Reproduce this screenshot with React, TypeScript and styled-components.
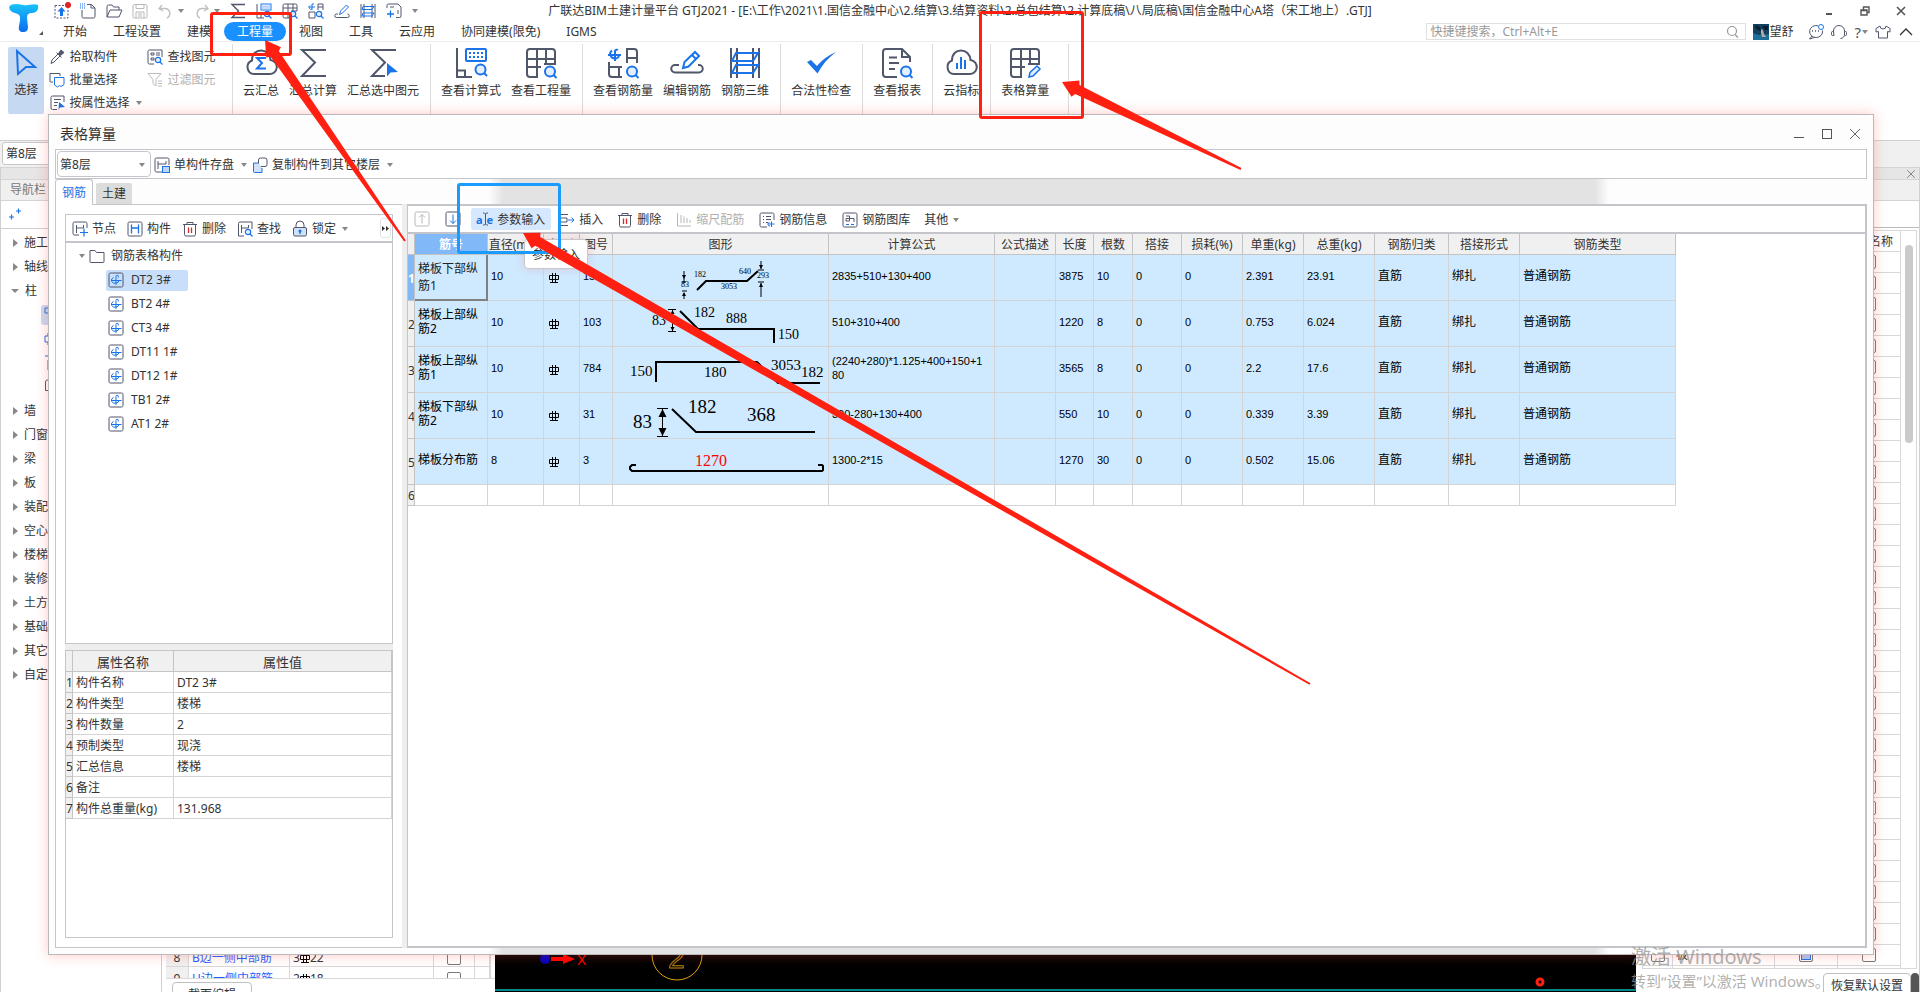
import React from "react";
import styled, { createGlobalStyle, css } from "styled-components";

const GlobalStyle = createGlobalStyle`
  * { box-sizing: border-box; }
  html, body { margin: 0; height: 100%; }
  #root { height: 100%; }
  body, button, input, select, table {
    font-family: "Noto Sans", "Noto Sans CJK SC", sans-serif;
    font-size: 12px;
    line-height: 16px;
    color: #333;
  }
  body { background: #fff; overflow: hidden; }
  button { border: 0; padding: 0; background: none; white-space: nowrap; }
  table { border-collapse: separate; border-spacing: 0; }
`;

const DARK = "#50576b";
const BLUE = "#1a73e8";
const LINE = "#c3c5ca";

/* ---------- icons ---------- */

const Svg = styled.svg`
  display: block;
  flex: none;
  fill: none;
  stroke: ${DARK};
  overflow: visible;
`;

type IconProps = { name: string; size?: number };

const magnifierSmall = (
  <g stroke={BLUE} strokeWidth="1.2">
    <circle cx="11" cy="11" r="2.7" fill="#e3effd" />
    <path d="M13 13l2.5 2.5" />
  </g>
);
const magnifierBig = (
  <g stroke={BLUE} strokeWidth="2">
    <circle cx="24" cy="23.5" r="5" fill="#e3effd" />
    <path d="M27.5 27l3 3" />
  </g>
);
const bigGrid = <path d="M12 29H4a3 3 0 0 1-3-3V4a3 3 0 0 1 3-3h22a3 3 0 0 1 3 3v12H18M1 11h28M11 1v28M20 1v15M1 19h14" />;

const smallIcons: Record<string, React.ReactNode> = {
  upload: <><rect x="1" y="2.500" width="13" height="12.500" strokeDasharray="2 1.500" /><path d="M7.500 4l4 4.500h-2.500v4.500h-3V8.500h-2.500z" fill={BLUE} stroke="none" /><circle cx="14" cy="2" r="3" fill="#e02020" stroke="none" /></>,
  newDoc: <><path d="M7 1.500h4.500L15 5v8.500a1.500 1.500 0 0 1-1.500 1.500h-10A1.500 1.500 0 0 1 2 13.500V7M11 1.500V5h4" /><path d="M0 1h5M0 3h5M0 5h5" stroke={BLUE} strokeDasharray="1 1" /></>,
  open: <path d="M1 14V3.500A1.500 1.500 0 0 1 2.500 2H6l1.500 2H13v3M1 14l3-7h12l-3 7z" />,
  save: <g stroke="#b8b8b8"><path d="M2.500 1.500h11a1.500 1.500 0 0 1 1.500 1.500v10.500a1.500 1.500 0 0 1-1.500 1.500h-11A1.500 1.500 0 0 1 1 13.500V3a1.500 1.500 0 0 1 1.500-1.500zM4 1.500v4h8v-4M4 15V9h8v6M6 11h4M6 13h4" /></g>,
  undo: <path d="M4 2L1 5.500l4 2.500M1 5.500h6a5 5 0 0 1 2 9.500" stroke="#c0c0c0" strokeWidth="1.400" />,
  redo: <path d="M11 2l3 3.500-4 2.500M14 5.500H8a5 5 0 0 0-2 9.500" stroke="#c0c0c0" strokeWidth="1.400" />,
  sigma: <path d="M15 1.500H2L8.500 8 2 14.500h13" strokeWidth="1.400" />,
  calc: <><path d="M1 1v14h7M1 11h4v4" /><rect x="5" y="1" width="10" height="6" stroke={BLUE} /><path d="M6.500 3.200h7M6.500 5h7" stroke={BLUE} strokeDasharray="1 1" />{magnifierSmall}</>,
  grid: <><path d="M8 15H2.500A1.500 1.500 0 0 1 1 13.500v-11A1.500 1.500 0 0 1 2.500 1h11A1.500 1.500 0 0 1 15 2.500V8H9M1 5h14M6 1v14M11 1v7M1 10h6" />{magnifierSmall}</>,
  rebarQty: <><path d="M1 9v6h6M1 9h6v6M10 7V1h5v6M10 4h5" /><path d="M1 4h6M4 7V1h2M2 2.500a2 2 0 0 0 2 3.500" stroke={BLUE} />{magnifierSmall}</>,
  editRebar: <><path d="M4 11H2.500a1.500 1.500 0 0 0 0 3.500h11a1.500 1.500 0 0 0 0-3.500" /><path d="M5.500 11.500l1-3.500 6-6 2 2-6 6z" stroke={BLUE} /></>,
  rebar3d: <><path d="M1 1v14M4 1v14M12 1v14M15 1v14" /><path d="M3 3.500h11l-2 3H2zM3 10h11l-2 3H2z" stroke={BLUE} /></>,
  docPlus: <><path d="M1 5V2.500A1.500 1.500 0 0 1 2.500 1H12l3 3v9a1.500 1.500 0 0 1-1.500 1.500H10M4 4h4M12 7v4" /><path d="M1 11h7M4.500 7.500v7" stroke={BLUE} strokeWidth="1.300" /></>,
  picker: <><path d="M2 14.500l1-3.500 6-6 2 2-6 6zM7.500 3.500l5 5" /><path d="M9.500 4.500l2.500-3.500 3 2.500-3.500 3z" fill={DARK} /></>,
  batch: <><path d="M4 10H1.500a.5.5 0 0 1-.5-.5V1.500h10V4" /><path d="M5.500 5.500H15v7l-3 2-1.500-1-2 1.500-3-2z" stroke={BLUE} /></>,
  byAttr: <><path d="M8 14.500H3.500A1.500 1.500 0 0 1 2 13V2.500A1.500 1.500 0 0 1 3.500 1H15v6M5 4.500h7M5 7.500h4M5 10.500h3" /><path d="M10 7l6 5-5 .5-1.500 2.500z" fill={BLUE} stroke="none" /></>,
  findEl: <><path d="M7 15H2.500A1.500 1.500 0 0 1 1 13.500v-11A1.500 1.500 0 0 1 2.500 1H15v7M4 4h3v2H4zM4 9h3v2H4zM9 4h4M9 6h4" />{magnifierSmall}</>,
  filter: <g stroke="#bcbcbc"><path d="M1 1.500h13L9 7.500v6.500l-3-2.500v-4zM11 9h4M11 11.500h4M11 14h4" /></g>,
  memberSave: <><path d="M8 15H2.500A1.500 1.500 0 0 1 1 13.500v-11A1.500 1.500 0 0 1 2.500 1h11A1.500 1.500 0 0 1 15 2.500V8M4 4v8M12 4v3M4 7h8" /><rect x="8.500" y="9.500" width="7" height="6" fill="#bcd7f8" stroke={BLUE} /></>,
  copy: <><rect x="6.500" y="1" width="8.500" height="8.500" rx="2" /><path d="M6 6H1.500v8.500a1 1 0 0 0 1 1H10V11" fill="#cfe2fa" stroke={BLUE} /></>,
  node: <><path d="M7 14H2.500A1.500 1.500 0 0 1 1 12.500v-10A1.500 1.500 0 0 1 2.500 1h11A1.500 1.500 0 0 1 15 2.500V7M4.500 4v8M11.500 4v3M4.500 7h7" /><path d="M8 11.500h8M12 7.500v8" stroke={BLUE} strokeWidth="1.200" /></>,
  member: <><rect x="1" y="1" width="14" height="14" rx="1.500" /><path d="M4.500 3.500v9M11.500 3.500v9M4.500 7h7" stroke={BLUE} strokeWidth="1.300" /></>,
  trash: <><path d="M1 3.500h14M5 3.500V1.500h6v2M2.500 3.500v10A1.500 1.500 0 0 0 4 15h8a1.500 1.500 0 0 0 1.500-1.500v-10" /><path d="M6.500 6.500v5.500M9.500 6.500v5.500" stroke="#d42a2a" strokeWidth="1.300" /></>,
  find: <><path d="M7 15H1.500V2.500A1.500 1.500 0 0 1 3 1h12v7M4.500 4v8M11.500 4v3M4.500 7h7" />{magnifierSmall}</>,
  lock: <><path d="M4 7V4a4 4 0 0 1 8 0v3" /><rect x="1.500" y="6.500" width="13" height="8.500" rx="1.500" fill="#cfe2fa" /><circle cx="8" cy="10" r="1.500" fill={BLUE} stroke="none" /><path d="M8 10v3" stroke={BLUE} strokeWidth="1.300" /></>,
  up: <g stroke="#b8b8b8"><rect x="1" y="1" width="14" height="14" rx="1.500" /><path d="M8 12.500v-9M5 6.500l3-3 3 3" /></g>,
  down: <><rect x="1" y="1" width="14" height="14" rx="1.500" /><path d="M8 3.500v9M5 9.500l3 3 3-3" stroke={BLUE} /></>,
  cursorText: <path d="M6 1h1.500l1 1 1-1H11M6 13h1.500l1-1 1 1H11M8.500 2v10" />,
  insert: <><path d="M1 2.500h8M1 6h7v4H1M1 13.500h8" /><path d="M9 8h6M12.500 5.500L15 8l-2.500 2.500" stroke={BLUE} /></>,
  scale: <g stroke="#b8b8b8"><path d="M1.500 1v13H15M5 3v8M8 4.500v6.500M11 6v5M14 8v3" /></g>,
  info: <><path d="M8 15H2.500A1.500 1.500 0 0 1 1 13.500v-11A1.500 1.500 0 0 1 2.500 1h11A1.500 1.500 0 0 1 15 2.500V8M4 4.500h1M7 4.500h5M4 7.500h1M7 7.500h5M4 10.500h1M7 10.500h2" /><path d="M9.500 12h6M12.500 15V9.500M10.500 10.500a1.500 1.500 0 1 0 .5 3.500" stroke={BLUE} /></>,
  library: <><rect x="1" y="1" width="14" height="14" rx="1.500" /><path d="M4 4h3.500v5H4V6.500h8V10" /><path d="M4 12.500h3M9 12.500h3" stroke={BLUE} strokeWidth="1.200" /></>,
  folder: <path d="M1 13.500v-11h5l1.500 2H15v9a1 1 0 0 1-1 1H2a1 1 0 0 1-1-1z" />,
  rebarItem: <><rect x="1" y="1" width="14" height="14" rx="1.500" /><path d="M3 8.500h10.500M8 13V4.500a1.200 1.200 0 0 1 2.400 0v1M5.500 5.500a3 2.800 0 0 0 2.500 5.500 3 3 0 0 0 3-2.500" stroke={BLUE} /></>,
  plusPlus: <path d="M1 11h5M3.500 8.500v5M8 5h5M10.500 2.500v5" stroke={BLUE} strokeWidth="1.200" />,
  pillarA: <path d="M1 1h14v5H10v9H5V6H1z" stroke={BLUE} />,
  pillarB: <path d="M4 2h8v3h3v6h-3v3H4v-3H1V5h3z" stroke={BLUE} />,
  pillarC: <path d="M1 1h14v4H4v10" stroke={BLUE} />,
  pillarD: <path d="M15 1H3.500A2 2 0 0 0 1.500 3v8.500h3V15" />,
  search: <g stroke="#999" strokeWidth="1.200"><circle cx="7" cy="7" r="4.500" /><path d="M10 10.500l3 3" /></g>,
  chat: <><path d="M14.500 6.500a6.500 6 0 1 1-4.500-4.700M4 12l-2.500 3 5-1.500" /><path d="M4 7h1M7 7h1M10 7h1" strokeWidth="1.500" /><circle cx="13" cy="3" r="2.500" stroke={BLUE} /></>,
  headset: <path d="M2.500 9V7a5.500 5.500 0 0 1 11 0v3a4 4 0 0 1-4 4.500M2.500 7.500h-1a1 1 0 0 0-1 1v2a1 1 0 0 0 1 1h1.500zM13.500 7.500h1a1 1 0 0 1 1 1v2a1 1 0 0 1-1 1h-1" />,
  shirt: <path d="M5 2L1 4.500v3.500l2.500-.5V14h9V7.500L15 8V4.500L11 2a3 3 0 0 1-6 0z" />,
  chevUp: <path d="M2 11l6-6 6 6" stroke="#333" strokeWidth="1.300" />,
  min: <path d="M5 11h6" stroke="#555" strokeWidth="2" />,
  restore: <path d="M4 7h6v5H4zM6.500 6.500V4h5.500v5.500H10M4 7.500h6" stroke="#555" strokeWidth="1.400" />,
  close: <path d="M4 4l8 8M12 4l-8 8" stroke="#555" strokeWidth="1.600" />,
  thinMin: <path d="M3 11.500h10" stroke="#555" />,
  thinMax: <rect x="3.500" y="3.500" width="9" height="9" stroke="#555" />,
  thinClose: <path d="M3 3l10 10M13 3L3 13" stroke="#666" />,
};

const bigIcons: Record<string, React.ReactNode> = {
  cloudSigma: <><path d="M8 26a7 7 0 0 1-2-13.500C6 6 10 2.500 15 2.500s9 3.500 9.500 9.500A7 7 0 0 1 23 26z" strokeWidth="2" /><path d="M20 10h-9l5 5-5 5.500h9" stroke={BLUE} strokeWidth="2" /></>,
  sigma: <path d="M28 2H4l13 12.500L4 28h24" strokeWidth="2" />,
  sigmaCursor: <><path d="M28 2H4l13 12.500L4 28h13" strokeWidth="2" /><path d="M19 15l11 9-7.500.5-3.500 4z" fill={BLUE} stroke="none" /></>,
  calc: <><path d="M1 0v29h15M1 22.500h8V29" strokeWidth="2" /><rect x="10" y="1" width="20" height="12" rx="1" stroke={BLUE} strokeWidth="2" /><path d="M13 5h14M13 9h14" stroke={BLUE} strokeWidth="2" strokeDasharray="2 2" /><g stroke={BLUE} strokeWidth="2"><circle cx="24.500" cy="21.500" r="5" fill="#e3effd" /><path d="M28 25l3 3" /></g></>,
  gridFind: <g strokeWidth="2">{bigGrid}{magnifierBig}</g>,
  rebarQty: <g strokeWidth="2"><path d="M1 14v12a3 3 0 0 0 3 3h10M1 19h13M11 19v10M19 15V1h7a3 3 0 0 1 3 3v11M19 10h10" /><path d="M0 7h13M7 13V3a2 2 0 0 1 3-1M4 2.500a5 4.500 0 0 0 3 8 4 4 0 0 0 4-2.500" stroke={BLUE} />{magnifierBig}</g>,
  editRebar: <g strokeWidth="2"><path d="M7 17H3a3.500 3.500 0 0 0 0 7.500h24a3.500 3.500 0 0 0 0-7.500h-1" /><path d="M11 20l1.500-6L23 4l4 4-10.500 10.500zM20 7l4 4" stroke={BLUE} /></g>,
  rebar3d: <g strokeWidth="2"><path d="M1 0v30M7 0v30M23 0v30M29 0v30" /><path d="M6 5h22l-5 8H2zM6 17h22l-5 8H2z" stroke={BLUE} /></g>,
  check: <path d="M1 14l4-2 6 6C17 11 23 7 30 4 22 10 16 17 11.500 25.500z" fill={BLUE} stroke="none" />,
  report: <g strokeWidth="2"><path d="M15 29H4a3 3 0 0 1-3-3V4a3 3 0 0 1 3-3h16l8 8v5M20 1v8h8M7 9.500h8M7 15h10M7 21h6" />{magnifierBig}</g>,
  cloudBars: <><path d="M8 26a7 7 0 0 1-2-13.500C6 6 10 2.500 15 2.500s9 3.500 9.500 9.500A7 7 0 0 1 23 26z" strokeWidth="2" /><path d="M11 15v6M15 9v12M19 12v9" stroke={BLUE} strokeWidth="2" /></>,
  gridPen: <g strokeWidth="2">{bigGrid}<path d="M19 29l1-4.500 7-6.500 3 3-7 7z" stroke={BLUE} strokeWidth="1.500" fill="#e3effd" /></g>,
  cursor: <path d="M1 2l18 16h-9l-8 7z" stroke={BLUE} strokeWidth="2" />,
};

const Icon = ({ name, size = 16 }: IconProps) => (
  <Svg width={size} height={size} viewBox="0 0 16 16" aria-hidden>{smallIcons[name]}</Svg>
);
const BigIcon = ({ name }: { name: string }) => (
  <Svg width={30} height={30} viewBox="0 0 30 30" aria-hidden>{bigIcons[name]}</Svg>
);

const Caret = styled.span<{ $left?: number }>`
  width: 0;
  height: 0;
  border: 3px solid transparent;
  border-top: 4px solid #888;
  border-bottom: 0;
  margin-left: ${(p) => p.$left ?? 0}px;
  flex: none;
`;

/* ---------- application frame ---------- */

const Page = styled.div`
  position: relative;
  height: 100vh;
  display: flex;
  flex-direction: column;
  overflow: hidden;
  background: #fff;
`;

const Header = styled.header`
  display: grid;
  grid-template-columns: 50px 1fr auto 1fr 50px;
  grid-template-rows: 22px 19px;
  border-bottom: 1px solid #ececec;
  flex: none;
`;

const LogoBox = styled.div`
  grid-row: 1 / 3;
  padding: 3px 0 0 8px;
`;

const QuickBar = styled.div`
  display: flex;
  align-items: center;
  gap: 10px;
  padding-left: 4px;
`;
const QuickPair = styled.span`
  display: flex;
  align-items: center;
  gap: 4px;
`;
const AppTitle = styled.h1`
  margin: 0;
  font-size: 12px;
  font-weight: 400;
  line-height: 22px;
  white-space: nowrap;
`;
const WindowControls = styled.div`
  grid-column: 4 / 6;
  display: flex;
  justify-content: flex-end;
  align-items: center;
  gap: 20px;
  padding-right: 11px;
`;

const MenuRow = styled.div`
  grid-column: 2 / 6;
  display: flex;
  align-items: stretch;
`;
const Menu = styled.nav`
  display: flex;
`;
const MenuItem = styled.button<{ $active?: boolean }>`
  padding: 0 13px;
  line-height: 19px;
  ${(p) => p.$active && css`background: #1890ff; color: #fff; border-radius: 10px;`}
`;
const MenuTools = styled.div`
  margin-left: auto;
  display: flex;
  align-items: center;
  padding-right: 6px;
  gap: 7px;
`;
const SearchBox = styled.label`
  display: flex;
  align-items: center;
  width: 320px;
  height: 17px;
  border: 1px solid #e0e0e0;
  padding: 0 4px 0 3px;
`;
const SearchInput = styled.input`
  flex: 1;
  border: 0;
  padding: 0;
  height: 15px;
  outline: 0;
  background: none;
  &::placeholder { color: #999; opacity: 1; }
`;
const User = styled.span`
  display: flex;
  align-items: center;
  margin-right: 8px;
`;
const Help = styled.button`
  display: flex;
  align-items: center;
  gap: 1px;
  font-size: 15px;
  color: ${DARK};
`;

const Ribbon = styled.div`
  display: flex;
  align-items: stretch;
  height: 98px;
  padding-top: 2px;
  flex: none;
`;
const PickGroup = styled.div`
  display: flex;
  width: 233px;
  padding: 3px 0 0 8px;
  border-right: 1px solid #dcdcdc;
`;
const SelectTool = styled.button`
  width: 40px;
  height: 67px;
  border-radius: 2px;
  background: #c5daf2;
  display: flex;
  flex-direction: column;
  align-items: center;
  gap: 6px;
  padding-top: 2px;
`;
const PickColumn = styled.div`
  display: flex;
  flex-direction: column;
  margin: -2px 0 0 5px;
  width: 93px;
`;
const PickButton = styled.button<{ $off?: boolean }>`
  display: flex;
  align-items: center;
  gap: 4px;
  height: 23px;
  color: ${(p) => (p.$off ? "#b0b0b0" : "#333")};
`;
const Group = styled.div<{ $wide?: boolean }>`
  display: flex;
  align-items: flex-start;
  padding: 4px ${(p) => (p.$wide ? 14 : 6)}px 0 5px;
  border-right: 1px solid #dcdcdc;
`;
const BigButton = styled.button`
  display: flex;
  flex-direction: column;
  align-items: center;
  gap: 5px;
  padding: 0 5px;
`;

const FloorStrip = styled.div`
  height: 27px;
  flex: none;
  background: #f0f0f0;
  border-top: 1px solid #d0d0d0;
  padding: 1px 1px 2px 2px;
`;
const FloorField = styled.select`
  appearance: none;
  width: 120px;
  height: 23px;
  border: 1px solid #c8c8c8;
  border-radius: 3px;
  background: #fff;
  padding: 0 3px;
`;

const Workspace = styled.div`
  flex: 1;
  min-height: 0;
  display: flex;
`;
const GripBar = styled.div`
  height: 12px;
  flex: none;
  background: #e6e6e6;
  border-top: 1px solid #d4d4d4;
  display: flex;
  justify-content: flex-end;
  align-items: center;
  padding-right: 2px;
`;
const PanelTitle = styled.div`
  height: 22px;
  flex: none;
  background: #f0f0f0;
  border: solid #d4d4d4;
  border-width: 1px 0;
  padding-left: 9px;
  line-height: 19px;
  color: #777;
`;
const NavPanel = styled.aside`
  width: 162px;
  flex: none;
  display: flex;
  flex-direction: column;
  border: solid #d0d0d0;
  border-width: 0 1px;
`;
const NavTools = styled.div`
  height: 28px;
  border-bottom: 1px solid #d0d0d0;
  padding: 5px 7px;
`;
const NavList = styled.ul`
  list-style: none;
  margin: 0;
  padding: 2px 0 0;
`;
const NavItem = styled.li<{ $open?: boolean }>`
  display: flex;
  align-items: center;
  height: 24px;
  padding-left: 12px;
  gap: 6px;
  &::before {
    content: "";
    border: 4px solid transparent;
    ${(p) => p.$open
      ? css`border-top-color: #888; margin: 4px 0 0 -2px;`
      : css`border-left: 5px solid #888; border-right: 0;`}
  }
`;
const NavSub = styled.li`
  display: flex;
  align-items: center;
  height: 24px;
  padding-left: 40px;
`;
const SubCell = styled.span<{ $on?: boolean }>`
  flex: 1;
  padding: 2px 3px;
  border-radius: 3px;
  background: ${(p) => (p.$on ? "#c5daf2" : "transparent")};
`;

const AttrPanel = styled.section`
  width: 333px;
  flex: none;
  display: flex;
  flex-direction: column;
`;
const AttrBody = styled.div`
  flex: 1;
  display: flex;
  flex-direction: column;
  justify-content: flex-end;
  padding-left: 4px;
`;
const AttrClip = styled.div`
  height: 33px;
  overflow: hidden;
  border-bottom: 1px solid #d8d8d8;
`;
const AttrTable = styled.table`
  table-layout: fixed;
  width: 325px;
  border-right: 1px solid #d8d8d8;
  td, th {
    height: 21px;
    padding: 3px 3px 0;
    border: solid #d8d8d8;
    border-width: 0 1px 1px 0;
    font-weight: 400;
    white-space: nowrap;
  }
  th { background: #f0f0f0; }
`;
const AttrFoot = styled.div`
  height: 13px;
  overflow: hidden;
  padding: 3px 0 0 6px;
`;
const PlainButton = styled.button<{ $w: number }>`
  width: ${(p) => p.$w}px;
  height: 26px;
  border: 1px solid #c0c0c0;
  border-radius: 4px;
  background: #fff;
`;
const LinkText = styled.span`
  color: #1f5fff;
`;

const Canvas = styled.div`
  flex: 1;
  display: flex;
  flex-direction: column;
  justify-content: flex-end;
  background: #000;
`;

const LayerPanel = styled.section`
  width: 284px;
  flex: none;
  display: flex;
  flex-direction: column;
  border-right: 1px solid #d0d0d0;
  background: #fff;
`;
const LayerTools = styled.div`
  height: 27px;
  flex: none;
  border-bottom: 1px solid #bbb;
`;
const LayerBox = styled.div`
  flex: 1;
  min-height: 0;
  overflow: hidden;
  margin: 2px 2px 0 6px;
  border: 1px solid #d8d8d8;
  display: flex;
  justify-content: space-between;
`;
const LayerTable = styled.table`
  table-layout: fixed;
  width: 258px;
  height: max-content;
  th, td {
    height: 21px;
    padding: 0;
    border: solid #d8d8d8;
    border-width: 0 1px 1px 0;
    text-align: center;
    font-weight: 400;
    white-space: nowrap;
  }
  th:last-child { padding: 1px 7px 0 0; text-align: right; }
  td:nth-child(2) { text-align: left; padding-left: 3px; }
`;
const ScrollThumb = styled.span`
  width: 8px;
  height: 198px;
  margin: 14px 3px 0 0;
  border-radius: 4px;
  background: #cacaca;
`;
const Check = styled.input`
  appearance: none;
  display: block;
  width: 14px;
  height: 14px;
  margin: 0 auto;
  border: 1px solid #777;
  border-radius: 2px;
  &:checked { background: #a9c8f5; box-shadow: inset 0 0 0 1px #fff, inset 0 0 0 2px ${BLUE}; }
`;
const LayerFoot = styled.div`
  height: 23px;
  flex: none;
  overflow: hidden;
  display: flex;
  justify-content: flex-end;
  align-items: flex-start;
  padding-top: 4px;
`;
const DarkThumb = styled.span`
  width: 8px;
  height: 30px;
  border-radius: 4px;
  background: #555;
`;

/* ---------- table-quantity dialog ---------- */

const Dialog = styled.section`
  position: absolute;
  left: 48px;
  right: 46px;
  top: 114px;
  bottom: 37px;
  display: flex;
  flex-direction: column;
  padding: 0 6px 6px;
  border: 1px solid #b9babd;
  background: linear-gradient(90deg, #fdfdfd 440px, #e3e3e3 454px, #e3e3e3 1546px, #fdfdfd 1560px);
  box-shadow: 0 0 12px rgba(255, 70, 60, 0.3);
`;
const DialogTitle = styled.header`
  display: flex;
  justify-content: space-between;
  align-items: center;
  height: 34px;
  margin: 0 -6px;
  padding: 4px 10px 0 11px;
  background: #fdfdfd;
  flex: none;
`;
const DialogName = styled.h2`
  margin: 0;
  font-size: 14px;
  line-height: 20px;
  font-weight: 400;
`;
const DialogControls = styled.div`
  display: flex;
  gap: 12px;
`;
const DialogBar = styled.div`
  display: flex;
  align-items: center;
  height: 30px;
  flex: none;
  border: 1px solid ${LINE};
  background: #fff;
  padding-left: 1px;
`;
const SelectWrap = styled.label`
  display: flex;
  align-items: center;
  width: 94px;
  height: 26px;
  border: 1px solid #c4c6ca;
  border-radius: 4px;
  padding: 2px 5px 0 2px;
  margin-right: 3px;
`;
const Select = styled.select`
  appearance: none;
  flex: 1;
  min-width: 0;
  border: 0;
  background: none;
  padding: 0;
  outline: 0;
`;
const ToolButton = styled.button<{ $off?: boolean; $on?: boolean }>`
  display: flex;
  align-items: center;
  gap: 4px;
  height: 22px;
  padding-top: 2px;
  color: ${(p) => (p.$off ? "#b0b0b0" : "#333")};
  ${(p) => p.$on && css`background: #d6e8fd; border-radius: 3px; padding: 2px 6px 0 5px;`}
`;
const Tabs = styled.div`
  display: flex;
  align-items: flex-end;
  height: 26px;
  flex: none;
  margin-bottom: -1px;
  position: relative;
`;
const Tab = styled.button<{ $active?: boolean }>`
  ${(p) => p.$active
    ? css`height: 26px; width: 38px; background: #fff; color: ${BLUE}; border: 1px solid ${LINE}; border-bottom: 0; border-radius: 3px 3px 0 0;`
    : css`height: 21px; width: 36px; margin: 0 0 1px 3px; background: #dcdcdc; border-radius: 2px 2px 0 0;`}
`;
const DialogBody = styled.div`
  flex: 1;
  min-height: 0;
  display: flex;
`;
const LeftPane = styled.div`
  width: 347px;
  flex: none;
  display: flex;
  flex-direction: column;
  border: 1px solid ${LINE};
  border-right: 0;
  background: #fff;
  padding: 9px;
`;
const Splitter = styled.div`
  width: 5px;
  background: #eee;
`;
const RightPane = styled.div`
  flex: 1;
  min-width: 0;
  display: flex;
  flex-direction: column;
  border: 2px solid ${LINE};
  border-left-width: 1px;
  background: #fff;
`;
const TreeBox = styled.div`
  flex: 431 1 0;
  min-height: 0;
  border: 1px solid ${LINE};
`;
const TreeTools = styled.div`
  display: flex;
  align-items: center;
  justify-content: space-between;
  height: 28px;
  border-bottom: 2px solid ${LINE};
  padding: 0 1px 0 6px;
`;
const ToolRow = styled.div`
  display: flex;
  align-items: center;
  gap: 11px;
`;
const MoreButton = styled.button`
  width: 11px;
  height: 20px;
  border: 1px solid #e4e4e4;
  border-radius: 3px;
  display: flex;
  align-items: center;
  justify-content: center;
`;
const Tree = styled.ul`
  list-style: none;
  margin: 0;
  padding: 1px 0 0;
`;
const TreeRoot = styled.li`
  display: flex;
  align-items: center;
  height: 24px;
  padding-left: 13px;
  gap: 4px;
  span:last-child { margin-left: 2px; }
`;
const TreeItem = styled.li`
  display: flex;
  align-items: center;
  height: 24px;
  padding-left: 40px;
`;
const TreeCell = styled.span<{ $on?: boolean }>`
  display: flex;
  align-items: center;
  gap: 7px;
  width: 82px;
  height: 21px;
  padding-left: 2px;
  border-radius: 2px;
  background: ${(p) => (p.$on ? "#c7dffa" : "transparent")};
`;
const BoxGap = styled.div`
  height: 6px;
  background: #eee;
`;
const PropBox = styled.div`
  flex: 288 1 0;
  min-height: 0;
  border: 1px solid ${LINE};
`;
const PropTable = styled.table`
  table-layout: fixed;
  width: 100%;
  th, td {
    height: 21px;
    padding: 2px 3px 0;
    border: solid #d4d4d4;
    border-width: 0 1px 1px 0;
    text-align: left;
    font-weight: 400;
    white-space: nowrap;
  }
  thead th { background: #f0f0f0; border-color: #c4c4c4; font-size: 13px; text-align: center; }
  tbody th { background: #f0f0f0; border-color: #c4c4c4; padding: 2px 0 0; }
`;
const GridTools = styled.div`
  display: flex;
  align-items: center;
  height: 28px;
  flex: none;
  border-bottom: 2px solid ${LINE};
  padding-left: 6px;
`;
const Pad = styled.span<{ $w: number }>`
  width: ${(p) => p.$w}px;
  flex: none;
`;
const AeLabel = styled.span`
  display: flex;
  align-items: center;
  font-weight: 700;
  font-size: 11px;
  color: ${BLUE};
  svg { margin: 0 -6px; }
`;

const RebarTable = styled.table`
  table-layout: fixed;
  width: 1268px;
  th, td {
    height: 46px;
    padding: 0 3px 3px;
    border: solid #d4d4d4;
    border-width: 0 1px 1px 0;
    text-align: left;
    font-weight: 400;
    overflow: hidden;
  }
  thead th {
    height: 21px;
    padding: 2px 0 0;
    background: #f0f0f0;
    border-color: #c4c4c4;
    text-align: center;
    white-space: nowrap;
  }
  tbody th { background: #f0f0f0; padding: 2px 0 0; border-color: #c4c4c4; }
  tbody td { background: #cfe9ff; color: #000; line-height: 14px; }
  tbody tr:last-child th, tbody tr:last-child td { height: 21px; background: #fff; }
  tbody tr:last-child th { background: #f0f0f0; }
  thead th.picked, tbody th.picked { background: #80b8f8; color: #fff; font-weight: 700; }
  tbody td.current { padding: 0 3px; border: solid #808080; border-width: 0 2px 2px 0; line-height: 17px; color: #222; }
  tbody td.num, tbody td.formula { font-family: "Liberation Sans", "Noto Sans CJK SC", sans-serif; font-size: 11px; }
  tbody td.formula { word-break: break-all; padding-right: 8px; }
  tbody td.grade { padding: 0 0 0 5px; }
  tbody td.draw { padding: 0; }
`;

const cols = [7, 73, 56, 36, 33, 216, 166, 61, 38, 39, 49, 61, 61, 71, 74, 71, 156];
const heads = ["", "筋号", "直径(mm)", "级别", "图号", "图形", "计算公式", "公式描述", "长度", "根数", "搭接", "损耗(%)", "单重(kg)", "总重(kg)", "钢筋归类", "搭接形式", "钢筋类型"];

const GradeSvg = styled.svg`
  display: inline-block;
  vertical-align: middle;
  fill: none;
  stroke: #000;
`;
const Grade = () => (
  <GradeSvg width="10" height="10" viewBox="0 0 10 10" aria-hidden>
    <path d="M3.500 0v9M6.500 0v9M.5 2.500h9v4h-9zM1 9.500h8" />
  </GradeSvg>
);

const ShapeSvg = styled.svg`
  display: block;
  fill: none;
  stroke: #000;
  stroke-width: 2px;
`;
const ShapeText = styled.text<{ $s: number; $c?: string }>`
  font-family: "Liberation Serif", serif;
  font-size: ${(p) => p.$s}px;
  fill: ${(p) => p.$c ?? "#000"};
  stroke: none;
`;
const Down = ({ x, y, s = 3 }: { x: number; y: number; s?: number }) => <path d={`M${x - s} ${y - 2 * s}h${2 * s}l-${s} ${2 * s}z`} fill="#000" stroke="none" />;
const Up = ({ x, y, s = 3 }: { x: number; y: number; s?: number }) => <path d={`M${x - s} ${y + 2 * s}h${2 * s}l-${s} -${2 * s}z`} fill="#000" stroke="none" />;

const shapes = [
  <>
    <path d="M71 16v12M69 27h4M69 36h5M71 38v6M148 6v8M145 15h6M145 27h6M148 28v14" strokeWidth="1" />
    <Down x={71} y={24} s={2} /><Up x={71} y={37} s={2} /><Down x={148} y={14} s={2} /><Up x={148} y={28} s={2} />
    <path d="M84 35l9-9h41l11-10" />
    <ShapeText $s={8} x="68" y="32">83</ShapeText>
    <ShapeText $s={8} x="81" y="22">182</ShapeText>
    <ShapeText $s={8} x="126" y="19">640</ShapeText>
    <ShapeText $s={8} x="144" y="23">293</ShapeText>
    <ShapeText $s={8} x="108" y="34">3053</ShapeText>
  </>,
  <>
    <path d="M55 8.500h8M55 30.500h8M59.500 9v22" strokeWidth="1" />
    <Up x={59.5} y={9} s={2} /><Down x={59.5} y={30} s={2} />
    <path d="M67 10l18 18h76v14" />
    <ShapeText $s={14} x="39" y="24">83</ShapeText>
    <ShapeText $s={14} x="81" y="16">182</ShapeText>
    <ShapeText $s={14} x="113" y="22">888</ShapeText>
    <ShapeText $s={14} x="165" y="38">150</ShapeText>
  </>,
  <>
    <path d="M43 35V15h101l21 21h42" />
    <ShapeText $s={15} x="17" y="29">150</ShapeText>
    <ShapeText $s={15} x="91" y="30">180</ShapeText>
    <ShapeText $s={15} x="158" y="23">3053</ShapeText>
    <ShapeText $s={15} x="188" y="30">182</ShapeText>
  </>,
  <>
    <path d="M44 15.500h11M44 43.500h11M49.500 16v27" strokeWidth="1" />
    <Up x={49.5} y={16} s={4} /><Down x={49.5} y={43} s={4} />
    <path d="M59 16l24 23h119" />
    <ShapeText $s={19} x="20" y="35">83</ShapeText>
    <ShapeText $s={19} x="75" y="20">182</ShapeText>
    <ShapeText $s={19} x="134" y="28">368</ShapeText>
  </>,
  <>
    <path d="M23 26h-4l-2 2v2l2 2h190l1-1v-4l-1-1h-4" />
    <ShapeText $s={16} $c="#f00" x="82" y="27">1270</ShapeText>
  </>,
];

const rows = [
  ["梯板下部纵筋1", "10", "152", "2835+510+130+400", "3875", "10", "2.391", "23.91"],
  ["梯板上部纵筋2", "10", "103", "510+310+400", "1220", "8", "0.753", "6.024"],
  ["梯板上部纵筋1", "10", "784", "(2240+280)*1.125+400+150+180", "3565", "8", "2.2", "17.6"],
  ["梯板下部纵筋2", "10", "31", "300-280+130+400", "550", "10", "0.339", "3.39"],
  ["梯板分布筋", "8", "3", "1300-2*15", "1270", "30", "0.502", "15.06"],
];

const props = [
  ["构件名称", "DT2 3#"],
  ["构件类型", "楼梯"],
  ["构件数量", "2"],
  ["预制类型", "现浇"],
  ["汇总信息", "楼梯"],
  ["备注", ""],
  ["构件总重量(kg)", "131.968"],
];

/* ---------- annotations ---------- */

const Tooltip = styled.div`
  position: absolute;
  left: 524px;
  top: 239px;
  height: 30px;
  padding: 0 7px;
  line-height: 29px;
  border: 1px solid #c8c8c8;
  border-radius: 4px;
  background: #fff;
  box-shadow: 0 0 8px rgba(255, 70, 60, 0.2);
`;
const Marker = styled.div<{ $x: number; $y: number; $w: number; $h: number; $c: string }>`
  position: absolute;
  left: ${(p) => p.$x}px;
  top: ${(p) => p.$y}px;
  width: ${(p) => p.$w}px;
  height: ${(p) => p.$h}px;
  border: 3px solid ${(p) => p.$c};
  border-radius: 3px;
  pointer-events: none;
`;
const Arrows = styled.svg`
  position: absolute;
  left: 0;
  top: 0;
  width: 100%;
  height: 100%;
  pointer-events: none;
  fill: #ff2012;
`;
const Watermark = styled.div`
  position: absolute;
  right: 94px;
  bottom: 0;
  width: 195px;
  white-space: nowrap;
  color: rgba(150, 150, 150, 0.75);
  font-size: 15px;
  line-height: 22px;
  pointer-events: none;
  strong { display: block; font-weight: 400; font-size: 20px; line-height: 26px; }
`;

const arrowPath = (tx: number, ty: number, ex: number, ey: number, neck: number) => {
  const len = Math.hypot(ex - tx, ey - ty);
  const dx = (ex - tx) / len;
  const dy = (ey - ty) / len;
  const at = (along: number, side: number) =>
    `${tx + dx * along - dy * side},${ty + dy * along + dx * side}`;
  return `M${at(0, 0)}L${at(15, -9)}L${at(17, -neck)}L${at(len, -1)}L${at(len, 1)}L${at(17, neck)}L${at(15, 9)}Z`;
};

const navBefore = ["施工", "轴线"];
const navAfter = ["墙", "门窗", "梁", "板", "装配", "空心", "楼梯", "装修", "土方", "基础", "其它", "自定"];

const ribbonGroups: [string, string][][] = [
  [["cloudSigma", "云汇总"], ["sigma", "汇总计算"], ["sigmaCursor", "汇总选中图元"]],
  [["calc", "查看计算式"], ["gridFind", "查看工程量"]],
  [["rebarQty", "查看钢筋量"], ["editRebar", "编辑钢筋"], ["rebar3d", "钢筋三维"]],
  [["check", "合法性检查"]],
  [["report", "查看报表"]],
  [["cloudBars", "云指标"]],
  [["gridPen", "表格算量"]],
];

const IconButton = ({ icon, label, size }: { icon: string; label: string; size?: number }) => (
  <button aria-label={label}><Icon name={icon} size={size} /></button>
);

export default function App() {
  return (
    <Page>
      <GlobalStyle />
      <Header>
        <LogoBox>
          <Svg width="38" height="34" viewBox="0 0 38 34" aria-hidden>
            <defs>
              <linearGradient id="logo" x1="0" y1="0" x2="0" y2="1">
                <stop offset="0" stopColor="#19c3f7" />
                <stop offset="1" stopColor="#0a6cf0" />
              </linearGradient>
            </defs>
            <path d="M1 4c3-4 8-3 14-2 6 1 10-2 15 0 1 5-2 8-6 8-3 0-5 1-5 5l1 9c0 4-2 5-5 5s-5-2-4-6c1-5 2-9 0-11C8 9 2 11 1 4z" fill="url(#logo)" stroke="none" />
            <path d="M35 28v4h-4z" fill="#555" stroke="none" />
          </Svg>
        </LogoBox>
        <QuickBar>
          {["upload", "newDoc", "open", "save"].map((n) => <IconButton key={n} icon={n} label={n} />)}
          <QuickPair><IconButton icon="undo" label="undo" /><Caret /></QuickPair>
          <QuickPair><IconButton icon="redo" label="redo" /><Caret /></QuickPair>
          {["sigma", "calc", "grid", "rebarQty", "editRebar", "rebar3d", "docPlus"].map((n) => <IconButton key={n} icon={n} label={n} />)}
          <Caret />
        </QuickBar>
        <AppTitle>广联达BIM土建计量平台 GTJ2021 - [E:\工作\2021\1.国信金融中心\2.结算\3.结算资料\2.总包结算\2.计算底稿\八局底稿\国信金融中心A塔（宋工地上）.GTJ]</AppTitle>
        <WindowControls>
          <IconButton icon="min" label="minimize" />
          <IconButton icon="restore" label="restore" />
          <IconButton icon="close" label="close" />
        </WindowControls>
        <MenuRow>
          <Menu>
            {["开始", "工程设置", "建模", "工程量", "视图", "工具", "云应用", "协同建模(限免)", "IGMS"].map((m) => (
              <MenuItem key={m} $active={m === "工程量"}>{m}</MenuItem>
            ))}
          </Menu>
          <MenuTools>
            <SearchBox>
              <SearchInput placeholder="快捷键搜索，Ctrl+Alt+E" aria-label="快捷键搜索" />
              <Icon name="search" />
            </SearchBox>
            <User>
              <Svg width="16" height="16" viewBox="0 0 16 16" aria-hidden>
                <g stroke="none">
                  <rect width="16" height="16" fill="#12405f" />
                  <path d="M0 9l6 2 10-1v6H0z" fill="#1c6f99" />
                  <path d="M2 1l5 2 1 4-5-2zM9 2h6v4h-3z" fill="#0a1c30" />
                  <path d="M8 5l2 1 1 4 2 3H9L8 9z" fill="#b9a9a4" />
                </g>
              </Svg>
              <span>望舒</span>
            </User>
            <IconButton icon="chat" label="chat" />
            <IconButton icon="headset" label="support" />
            <Help aria-label="help">?<Caret /></Help>
            <IconButton icon="shirt" label="skin" />
            <IconButton icon="chevUp" label="collapse" />
          </MenuTools>
        </MenuRow>
      </Header>

      <Ribbon>
        <PickGroup>
          <SelectTool>
            <Svg width="20" height="27" viewBox="0 0 20 27" aria-hidden>{bigIcons.cursor}</Svg>
            选择
          </SelectTool>
          <PickColumn>
            <PickButton><Icon name="picker" />拾取构件</PickButton>
            <PickButton><Icon name="batch" />批量选择</PickButton>
            <PickButton><Icon name="byAttr" />按属性选择<Caret $left={3} /></PickButton>
          </PickColumn>
          <PickColumn>
            <PickButton><Icon name="findEl" />查找图元</PickButton>
            <PickButton $off><Icon name="filter" />过滤图元</PickButton>
          </PickColumn>
        </PickGroup>
        {ribbonGroups.map((g, i) => (
          <Group key={i} $wide={i === ribbonGroups.length - 1}>
            {g.map(([icon, label]) => (
              <BigButton key={label}><BigIcon name={icon} />{label}</BigButton>
            ))}
          </Group>
        ))}
      </Ribbon>

      <FloorStrip>
        <FloorField aria-label="楼层" defaultValue="8"><option value="8">第8层</option></FloorField>
      </FloorStrip>

      <Workspace>
        <NavPanel>
          <GripBar />
          <PanelTitle>导航栏</PanelTitle>
          <NavTools><Icon name="plusPlus" /></NavTools>
          <NavList>
            {navBefore.map((n) => <NavItem key={n}>{n}</NavItem>)}
            <NavItem $open>柱</NavItem>
            {["pillarA", "pillarB", "pillarC", "pillarD"].map((n, i) => (
              <NavSub key={n}><SubCell $on={i === 0}><Icon name={n} /></SubCell></NavSub>
            ))}
            {navAfter.map((n) => <NavItem key={n}>{n}</NavItem>)}
          </NavList>
        </NavPanel>

        <AttrPanel>
          <GripBar />
          <PanelTitle />
          <AttrBody>
            <AttrClip>
              <AttrTable>
                <colgroup><col style={{ width: 23 }} /><col style={{ width: 101 }} /><col style={{ width: 144 }} /><col style={{ width: 41 }} /><col /></colgroup>
                <tbody>
                  <tr><th scope="row">8</th><td><LinkText>B边一侧中部筋</LinkText></td><td>3<Grade />22</td><td><Check type="checkbox" aria-label="附加 8" /></td><td /></tr>
                  <tr><th scope="row">9</th><td><LinkText>H边一侧中部筋</LinkText></td><td>2<Grade />18</td><td><Check type="checkbox" aria-label="附加 9" /></td><td /></tr>
                </tbody>
              </AttrTable>
            </AttrClip>
            <AttrFoot><PlainButton $w={80}>截面编辑</PlainButton></AttrFoot>
          </AttrBody>
        </AttrPanel>

        <Canvas>
          <Svg width="100%" height="50" aria-hidden>
            <circle cx="50" cy="17" r="5" fill="#0000c0" stroke="none" />
            <path d="M56 15h12v-3l12 5-12 5v-3H56z" fill="#f00" stroke="none" />
            <text x="82" y="23" fontSize="14" fill="#f00" stroke="none" fontFamily="Liberation Sans">X</text>
            <circle cx="182" cy="13" r="25" stroke="#e0a010" />
            <text x="173" y="26" fontSize="30" fill="none" stroke="#b08010" fontFamily="Liberation Sans">2</text>
            <rect x="0" y="47" width="100%" height="2" fill="#088" stroke="none" />
            <svg x="100%" overflow="visible"><circle cx="-96" cy="40" r="3" stroke="#ff2012" strokeWidth="3" /></svg>
          </Svg>
        </Canvas>

        <LayerPanel>
          <GripBar><Icon name="thinClose" size={12} /></GripBar>
          <PanelTitle />
          <LayerTools />
          <LayerBox>
            <LayerTable>
              <colgroup><col style={{ width: 30 }} /><col style={{ width: 102 }} /><col style={{ width: 63 }} /><col style={{ width: 63 }} /></colgroup>
              <thead><tr><th /><th /><th /><th scope="col">名称</th></tr></thead>
              <tbody>
                {Array.from({ length: 36 }, (_, i) => (
                  <tr key={i}>
                    <td><Check type="checkbox" aria-label={`显示 ${i + 1}`} /></td>
                    <td>{i === 33 ? "板" : ""}</td>
                    <td><Check type="checkbox" defaultChecked={i === 33} aria-label={`图元 ${i + 1}`} /></td>
                    <td><Check type="checkbox" aria-label={`名称 ${i + 1}`} /></td>
                  </tr>
                ))}
              </tbody>
            </LayerTable>
            <ScrollThumb />
          </LayerBox>
          <LayerFoot>
            <PlainButton $w={88}>恢复默认设置</PlainButton>
            <DarkThumb />
          </LayerFoot>
        </LayerPanel>
      </Workspace>

      <Dialog role="dialog" aria-label="表格算量">
        <DialogTitle>
          <DialogName>表格算量</DialogName>
          <DialogControls>
            <IconButton icon="thinMin" label="minimize dialog" />
            <IconButton icon="thinMax" label="maximize dialog" />
            <IconButton icon="thinClose" label="close dialog" />
          </DialogControls>
        </DialogTitle>
        <DialogBar>
          <SelectWrap>
            <Select aria-label="楼层" defaultValue="8"><option value="8">第8层</option></Select>
            <Caret />
          </SelectWrap>
          <ToolButton><Icon name="memberSave" />单构件存盘<Caret $left={3} /></ToolButton>
          <Pad $w={5} />
          <ToolButton><Icon name="copy" />复制构件到其它楼层<Caret $left={3} /></ToolButton>
        </DialogBar>
        <Tabs>
          <Tab $active>钢筋</Tab>
          <Tab>土建</Tab>
        </Tabs>
        <DialogBody>
          <LeftPane>
            <TreeBox>
              <TreeTools>
                <ToolRow>
                  <ToolButton><Icon name="node" />节点</ToolButton>
                  <ToolButton><Icon name="member" />构件</ToolButton>
                  <ToolButton><Icon name="trash" />删除</ToolButton>
                  <ToolButton><Icon name="find" />查找</ToolButton>
                  <ToolButton><Icon name="lock" />锁定<Caret $left={2} /></ToolButton>
                </ToolRow>
                <MoreButton aria-label="more">
                  <Svg width="7" height="5" viewBox="0 0 7 5" aria-hidden><path d="M0 0l3 2.500L0 5zM4 0l3 2.500L4 5z" fill="#333" stroke="none" /></Svg>
                </MoreButton>
              </TreeTools>
              <Tree>
                <TreeRoot><Caret /><Icon name="folder" /><span>钢筋表格构件</span></TreeRoot>
                {["DT2 3#", "BT2 4#", "CT3 4#", "DT11 1#", "DT12 1#", "TB1 2#", "AT1 2#"].map((t, i) => (
                  <TreeItem key={t}><TreeCell $on={i === 0}><Icon name="rebarItem" />{t}</TreeCell></TreeItem>
                ))}
              </Tree>
            </TreeBox>
            <BoxGap />
            <PropBox>
              <PropTable>
                <colgroup><col style={{ width: 7 }} /><col style={{ width: 101 }} /><col /></colgroup>
                <thead><tr><th /><th scope="col">属性名称</th><th scope="col">属性值</th></tr></thead>
                <tbody>
                  {props.map(([k, v], i) => (
                    <tr key={k}><th scope="row">{i + 1}</th><td>{k}</td><td>{v}</td></tr>
                  ))}
                </tbody>
              </PropTable>
            </PropBox>
          </LeftPane>
          <Splitter />
          <RightPane>
            <GridTools>
              <IconButton icon="up" label="move up" />
              <Pad $w={15} />
              <IconButton icon="down" label="move down" />
              <Pad $w={10} />
              <ToolButton $on>
                <AeLabel>a<Icon name="cursorText" />e</AeLabel>
                参数输入
              </ToolButton>
              <Pad $w={8} />
              <ToolButton><Icon name="insert" />插入</ToolButton>
              <Pad $w={14} />
              <ToolButton><Icon name="trash" />删除</ToolButton>
              <Pad $w={15} />
              <ToolButton $off><Icon name="scale" />缩尺配筋</ToolButton>
              <Pad $w={15} />
              <ToolButton><Icon name="info" />钢筋信息</ToolButton>
              <Pad $w={15} />
              <ToolButton><Icon name="library" />钢筋图库</ToolButton>
              <Pad $w={14} />
              <ToolButton>其他<Caret $left={1} /></ToolButton>
            </GridTools>
            <RebarTable>
              <colgroup>{cols.map((w, i) => <col key={i} style={{ width: w }} />)}</colgroup>
              <thead>
                <tr>{heads.map((h, i) => <th key={i} scope="col" className={i === 1 ? "picked" : undefined}>{h}</th>)}</tr>
              </thead>
              <tbody>
                {rows.map((r, i) => (
                  <tr key={i}>
                    <th scope="row" className={i === 0 ? "picked" : undefined}>{i + 1}</th>
                    <td className={i === 0 ? "current" : undefined}>{r[0]}</td>
                    <td className="num">{r[1]}</td>
                    <td className="grade"><Grade /></td>
                    <td className="num">{r[2]}</td>
                    <td className="draw">
                      <ShapeSvg width="215" height="45" viewBox="0 0 215 45">{shapes[i]}</ShapeSvg>
                    </td>
                    <td className="formula">{r[3]}</td>
                    <td />
                    <td className="num">{r[4]}</td>
                    <td className="num">{r[5]}</td>
                    <td className="num">0</td>
                    <td className="num">0</td>
                    <td className="num">{r[6]}</td>
                    <td className="num">{r[7]}</td>
                    <td>直筋</td>
                    <td>绑扎</td>
                    <td>普通钢筋</td>
                  </tr>
                ))}
                <tr><th scope="row">6</th>{cols.slice(1).map((_, i) => <td key={i} />)}</tr>
              </tbody>
            </RebarTable>
          </RightPane>
        </DialogBody>
      </Dialog>

      <Tooltip role="tooltip">参数输入</Tooltip>
      <Marker $x={210} $y={12} $w={82} $h={44} $c="#ff2012" />
      <Marker $x={979} $y={11} $w={105} $h={108} $c="#ff2012" />
      <Marker $x={457} $y={183} $w={104} $h={71} $c="#1a9cff" />
      <Arrows aria-hidden>
        <path d={arrowPath(265, 40, 405, 241, 5)} />
        <path d={arrowPath(1062, 82, 1241, 169, 5)} />
        <path d={arrowPath(523, 233, 1310, 684, 5)} />
      </Arrows>
      <Watermark><strong>激活 Windows</strong>转到“设置”以激活 Windows。</Watermark>
    </Page>
  );
}
